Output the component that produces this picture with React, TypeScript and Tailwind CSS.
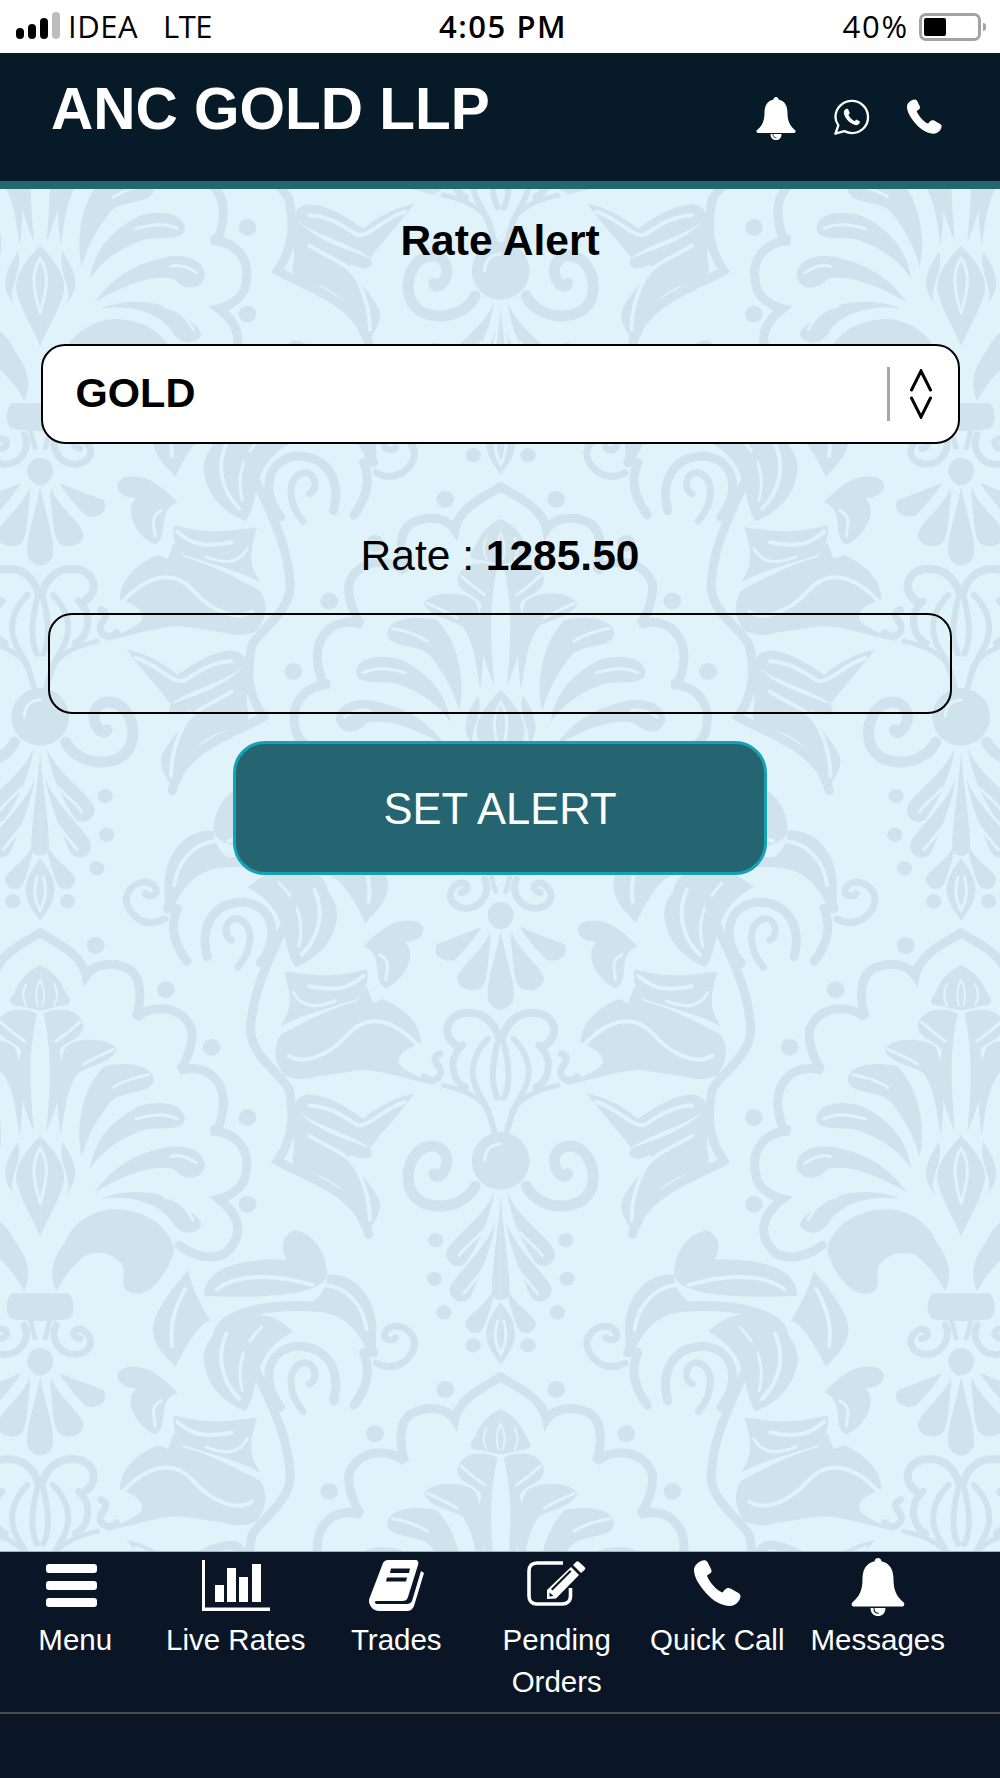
const PAPER = "#e1f3fa"
const INK = "#d0e3ed"
const NAV = "#0a1625"

// half of one damask repeat, traced around the column axis (x = distance from axis)
const fills = [
  // fan above the knot
  "M0 75 C6 130 22 190 20 225 C18 250 8 260 0 260 Z",
  "M14 78 C22 120 62 160 65 190 C65 212 42 222 30 208 C18 190 20 120 14 78 Z",
  "M30 65 L100 105 C106 130 90 150 72 142 C60 125 40 90 30 65 Z",
  // drip below the knot
  "M10 690 C20 750 85 810 85 840 C85 868 65 878 55 862 C40 830 15 760 10 690 Z",
  "M8 760 C15 820 80 900 80 925 C80 958 55 962 47 942 C35 900 12 820 8 760 Z",
  "M0 700 C4 790 14 870 14 930 C14 945 6 950 0 950 Z",
  "M10 915 C15 960 60 990 55 1010 C50 1036 30 1036 25 1010 C20 990 10 950 10 915 Z",
  "M0 955 C15 985 25 1012 22 1040 C20 1066 8 1085 0 1105 Z",
  // wing
  "M125 340 C125 300 145 260 185 235 L200 245 L210 205 L225 240 C250 250 285 270 345 320 C358 350 355 385 340 415 C325 428 305 428 290 420 L225 405 C190 400 140 430 100 440 C130 420 160 400 160 385 C160 365 150 355 125 340 Z",
  "M210 165 C280 190 300 175 340 170 C325 240 330 265 345 300 C300 265 250 250 225 235 C215 225 205 190 210 165 Z",
  "M135 460 C170 470 200 500 215 520 C235 500 265 465 300 462 C315 465 322 475 322 490 C310 530 230 555 205 590 C185 550 160 510 135 460 Z",
  "M325 480 C310 540 240 570 205 590 C195 610 210 625 235 605 C245 620 205 660 190 715 C185 750 205 770 207 795 C235 770 215 710 270 665 C300 640 335 650 325 600 C320 560 335 520 325 480 Z",
  // scroll beside the fan
  "M215 110 C195 80 170 40 135 50 C110 60 120 100 150 100 C130 130 150 190 180 210 C205 190 180 130 215 110 Z",
  // big leaf under the wing
  "M325 785 C345 800 345 830 335 855 C400 850 465 870 465 940 C340 950 275 930 272 890 C272 830 300 785 325 785 Z",
  "M385 985 C440 1000 470 1050 465 1100 C460 1150 440 1190 400 1215 C375 1160 395 1080 325 1025 C345 1000 360 985 385 985 Z",
  "M490 880 C515 920 550 990 545 1030 C540 1070 520 1090 510 1110 C495 1060 470 1000 455 1000 C470 960 485 920 490 880 Z",
  "M272 890 C225 885 197 950 195 1010 C195 1040 195 1060 197 1085 C212 1030 235 985 295 955 C280 940 272 915 272 890 Z",
]

const strokes: [string, number][] = [
  // spiral beside the knot
  ["M40 680 C60 745 150 750 145 650 C140 580 95 565 85 610 C80 640 100 670 105 650", 11],
  // fleur above the knot
  ["M2 330 C10 285 30 268 50 268 C85 268 95 320 70 345", 8],
  ["M5 340 C15 400 15 440 5 470", 6],
  ["M20 330 C40 360 50 400 40 440 C35 465 20 480 10 550", 6],
  ["M60 345 C85 380 75 430 55 445", 7],
  ["M95 365 C110 372 100 390 95 400 C90 420 105 440 120 420", 7],
  ["M90 440 C60 450 35 465 18 500", 5],
  // outer band of the wing
  ["M325 0 C330 60 390 180 392 310 C392 370 340 420 332 450 C325 500 322 560 350 620 C320 650 220 690 207 795", 9],
  // leaf arch, curls and scroll
  ["M440 1060 C460 1000 395 960 300 965 C250 965 220 1000 200 1075", 10],
  ["M345 1205 C375 1150 370 1070 320 1060 C270 1060 250 1120 262 1190", 9],
  ["M310 1215 C335 1170 335 1110 310 1100 C290 1095 285 1140 300 1150", 7],
  ["M230 1200 C205 1150 205 1110 215 1075", 9],
  ["M195 1100 C165 1125 135 1090 135 1050 C140 1010 175 1000 182 1030 C185 1045 170 1050 165 1040", 7],
]

const knockouts: [string, number][] = [
  ["M5 1000 C10 1030 10 1050 0 1080", 3],
  ["M30 790 C45 815 60 830 65 845", 3],
  ["M24 870 C35 895 50 920 58 935", 3],
  ["M130 345 C170 280 210 270 240 320 C270 372 310 392 332 370", 4],
  ["M215 180 C235 205 250 220 300 205", 4],
  ["M260 240 C285 255 310 260 325 220", 3],
  ["M150 480 C185 495 205 540 225 535 C250 510 270 490 300 488", 4],
  ["M300 560 C270 590 240 600 225 640 C215 670 205 715 205 760", 4],
  ["M445 925 C410 885 350 890 295 915", 4],
  ["M430 1030 C445 1080 440 1140 410 1185", 4],
  ["M375 1015 C405 1060 415 1110 405 1165", 3],
  ["M495 925 C510 965 520 1010 515 1060", 4],
  ["M275 915 C240 920 215 965 210 1020", 4],
  ["M190 130 C170 145 180 170 180 190", 3],
]

const dots = [
  [102, 808],
  [104, 900],
  [89, 980],
  [43, 1058],
]

// fleur and its scalloped outline, drawn in the side column's coordinates
const fleurFills = [
  "M0 560 C25 600 45 640 35 680 C25 730 10 760 0 800 Z",
  "M35 575 C55 620 65 660 40 700 C55 665 25 625 35 575 Z",
  "M0 155 C14 165 30 180 40 220 C50 240 52 250 30 252 C15 258 5 262 0 262 Z",
  "M5 270 C30 250 65 260 68 300 C65 335 35 335 30 360 C40 420 30 480 10 550 C15 450 20 370 5 270 Z",
  "M40 350 C55 325 110 325 120 355 C115 385 75 395 60 410 C40 450 38 510 32 560 C25 480 25 400 40 350 Z",
  "M100 395 C125 385 178 385 178 430 C170 465 130 450 110 480 C85 530 75 560 65 610 C55 540 65 450 100 395 Z",
  "M155 490 C185 475 225 480 227 520 C225 550 190 540 165 545 C115 570 90 610 78 640 C85 570 110 525 155 490 Z",
  "M190 590 C225 575 260 595 258 635 C250 670 225 665 210 640 C175 625 125 660 85 695 C110 640 145 605 190 590 Z",
  "M95 710 C130 685 185 690 210 715 C235 740 260 760 250 780 C235 800 215 790 205 760 C185 720 140 700 95 710 Z",
  "M40 810 C50 770 80 740 110 735 C165 730 205 780 210 830 C208 850 200 880 185 905 C175 925 165 935 150 935 C120 930 135 900 130 870 C115 840 95 830 70 845 C50 870 35 900 25 930 C10 880 25 840 40 810 Z",
  "M-45 935 L45 935 C55 950 55 985 45 995 C20 1002 -20 1002 -45 995 Z",
  "M0 1065 C18 1070 22 1095 18 1110 C12 1125 6 1130 0 1130 Z",
  "M0 1130 C5 1185 22 1250 20 1295 C18 1310 8 1320 0 1320 Z",
  "M16 1130 C25 1180 68 1220 68 1250 C65 1275 42 1280 32 1265 C20 1240 20 1180 16 1130 Z",
  "M32 1125 L100 1170 C108 1190 92 1210 72 1202 C60 1185 40 1150 32 1125 Z",
]

const fleurStrokes: [string, number][] = [
  ["M0 78 C22 100 65 125 72 180 C85 150 115 145 140 165 C165 190 155 260 150 280 C175 245 225 250 238 310 C240 350 225 395 218 405 C260 385 302 430 282 530 C280 545 268 548 268 548 C305 550 335 590 320 665 C310 700 280 710 280 710 C315 750 320 800 290 840 C265 860 235 840 218 820", 9],
  ["M25 1010 C15 1040 30 1080 55 1080 C85 1075 85 1035 65 1020 C50 1015 48 1040 62 1042", 7],
  ["M15 1000 C12 1015 12 1025 8 1040", 5],
]

const fleurKnockouts: [string, number][] = [
  ["M0 590 C12 620 14 650 0 720", 3],
  ["M62 290 C55 300 40 320 25 335", 3],
  ["M115 355 C100 365 85 375 68 390", 3],
  ["M170 415 C150 420 130 430 115 445", 3],
  ["M215 520 C195 505 175 510 150 520", 3],
  ["M245 625 C230 610 215 605 205 610", 3],
  ["M240 760 C230 730 215 710 195 705", 3],
  ["M0 190 C6 205 8 225 4 250", 2],
  ["M22 200 C28 215 28 235 22 250", 2],
]

const fleurDots = [
  [87, 108],
  [197, 213],
  [269, 350],
  [325, 517],
  [325, 723],
]

function Filled({ shapes }: { shapes: string[] }) {
  return (
    <>
      {shapes.map((d) => (
        <path key={d} d={d} fill={INK} />
      ))}
    </>
  )
}

function Lines({ lines, color }: { lines: [string, number][]; color: string }) {
  return (
    <>
      {lines.map(([d, w]) => (
        <path key={d} d={d} fill="none" stroke={color} strokeWidth={w} strokeLinecap="round" vectorEffect="non-scaling-stroke" />
      ))}
    </>
  )
}

function Half() {
  return (
    <g>
      <Filled shapes={fills} />
      <Lines lines={strokes} color={INK} />
      <Lines lines={knockouts} color={PAPER} />
      <ellipse cx={0} cy={35} rx={20} ry={30} fill={INK} />
      <ellipse cx={0} cy={620} rx={45} ry={68} fill={INK} />
      <Lines lines={[["M0 580 C15 580 25 595 25 620", 3]]} color={PAPER} />
      {dots.map(([x, y]) => (
        <ellipse key={y} cx={x} cy={y} rx={12} ry={17} fill={INK} />
      ))}
      <g transform="translate(0 1055)">
        <Filled shapes={fleurFills} />
        <Lines lines={fleurStrokes} color={INK} />
        <Lines lines={fleurKnockouts} color={PAPER} />
        {fleurDots.map(([x, y]) => (
          <ellipse key={y} cx={x} cy={y} rx={14} ry={20} fill={INK} />
        ))}
      </g>
    </g>
  )
}

function Unit({ x, y }: { x: number; y: number }) {
  return (
    <g transform={`translate(${x} ${y})`}>
      <Half />
      <g transform="scale(-1 1)">
        <Half />
      </g>
    </g>
  )
}

function Damask() {
  const units: [number, number][] = []
  for (const j of [-2, -1, 0]) {
    units.push([785, 2115 * j])
    units.push([63, 1060 + 2115 * j])
    units.push([1507, 1060 + 2115 * j])
    units.push([-659, 2115 * j])
    units.push([2229, 2115 * j])
  }
  return (
    <svg className="absolute inset-0 h-full w-full" viewBox="0 0 1000 1362" aria-hidden="true">
      <g transform="translate(0 711) scale(0.6378 0.4209)">
        {units.map(([x, y]) => (
          <Unit key={`${x}-${y}`} x={x} y={y} />
        ))}
      </g>
    </svg>
  )
}

function Bell({ className }: { className: string }) {
  return (
    <svg viewBox="0 0 40 43" className={className} fill="white" aria-hidden="true">
      <path d="M20 0 C21.500 0 22.500 1 22.500 2.500 C29 4 31.500 9 31.500 16 C31.500 24 34 29 39 33 C40 34 39.500 36 38 36 L2 36 C0.500 36 0 34 1 33 C6 29 8.500 24 8.500 16 C8.500 9 11 4 17.500 2.500 C17.500 1 18.500 0 20 0 Z" />
      <path d="M14.500 37 L25.500 37 C25.500 41 23 43 20 43 C17 43 14.500 41 14.500 37 Z" />
      <path d="M17 37 C17 39.500 18.500 41 20.500 41" fill="none" stroke={NAV} strokeWidth="0.8" />
    </svg>
  )
}

function Phone({ className }: { className: string }) {
  return (
    <svg viewBox="0 0 47 46" className={className} fill="white" aria-hidden="true">
      <path d="M7 1 C10 -0.500 12 0 13.500 2 L17 9 C18 11 17.500 12.500 16 13.500 L13 15.500 C14.500 21 23 31 28.500 32.500 L31 29.500 C32.500 28 34.500 27.500 36.500 28.500 L44.500 33 C46.500 34.500 47 36 46 38.500 C44.500 43 40 46 36 46 C28 46 19 41 12 33 C5 25 0 17 0 10 C0 6 3 3 7 1 Z" />
    </svg>
  )
}

function Whatsapp() {
  return (
    <svg viewBox="0 0 38 38" className="h-[37px] w-[37px]" aria-hidden="true">
      <path d="M2.500 35.500 L5.500 27 C3.500 24 2.500 21.500 2.500 18.500 C2.500 9.500 10 2 19.500 2 C28.500 2 36 9.500 36 18.500 C36 28 28.500 35 19.500 35 C16.500 35 14 34.200 11.500 33 Z" fill="none" stroke="white" strokeWidth="2.400" strokeLinejoin="round" />
      <path d="M13.500 10 C11.500 11 10.500 13 11.500 16 C13 20.500 17 25 22 26.500 C25 27.500 27 26.500 27.500 24 L27.500 22.800 L23.800 21 L22.300 22.800 C19.500 21.500 17 19 15.800 16.300 L17.300 14.800 L15.500 10.300 Z" fill="white" />
    </svg>
  )
}

function MenuIcon() {
  return (
    <svg viewBox="0 0 51 43" className="h-[43px] w-[51px]" fill="white" aria-hidden="true">
      <rect x="0" y="0" width="51" height="9" rx="3" />
      <rect x="0" y="17" width="51" height="9" rx="3" />
      <rect x="0" y="34" width="51" height="9" rx="3" />
    </svg>
  )
}

function BarsChart() {
  return (
    <svg viewBox="0 0 68 51" className="h-[51px] w-[68px]" fill="white" aria-hidden="true">
      <path d="M0 0 H3 V47.500 H68 V51 H0 Z" />
      <rect x="13" y="25" width="9" height="17" />
      <rect x="25" y="8" width="9" height="34" />
      <rect x="37" y="17" width="9" height="25" />
      <rect x="50" y="4" width="9" height="38" />
    </svg>
  )
}

function Book() {
  return (
    <svg viewBox="0 0 55 51" className="h-[51px] w-[55px]" aria-hidden="true">
      <path
        fill="white"
        d="M14 3 C15 1 17 0 19 0 H46 C49 0 50 2 49 5 L39 37 C38 40 36 41 33 41 H8 C6 41 5 42 6 43 C7 44 8 44 10 44 H38 C40 44 42 43 43 41 L52 11 L55 13 L45 46 C44 49 41 51 38 51 H10 C5 51 1 47 0 42 C0 40 0 39 1 37 Z"
      />
      <path fill={NAV} d="M22 8.500 H41 L40 13 H21 Z M18 17.500 H38 L37 21.500 H17 Z" />
    </svg>
  )
}

function EditIcon() {
  return (
    <svg viewBox="0 0 59 46" className="h-[46px] w-[59px]" aria-hidden="true">
      <path d="M36 3 H10 C5 3 2 6 2 11 V36 C2 41 5 44 10 44 H35 C40 44 43.500 41 43.500 36 V28" fill="none" stroke="white" strokeWidth="3.600" />
      <path fill="white" d="M46 5 L49 2 C50 1 51 1 52 2 L57.500 7 C58.500 8 58.500 9 57.500 10 L54 13 Z M44 7 L52 15 L29 38.500 L20 39 L20 30 Z" />
      <path fill={NAV} d="M22.500 32.500 L26.500 36 L22.500 36.500 Z M24 29 L43 10 L44.500 11.500 L25.500 30.500 Z" />
    </svg>
  )
}

function Tab({ label, icon }: { label: string; icon: React.ReactNode }) {
  return (
    <div className="flex flex-col items-center">
      <div className="flex h-[59px] items-start justify-center">{icon}</div>
      <span className="w-[150px] text-center text-[29.5px] leading-[42px] text-white">{label}</span>
    </div>
  )
}

export default function App() {
  return (
    <div className="flex h-[1778px] w-[1000px] flex-col overflow-hidden font-['Liberation_Sans',sans-serif] text-black">
      <div className="relative flex h-[53px] shrink-0 items-center bg-white pl-4 pr-[14px] font-['Open_Sans',sans-serif] text-[31px]">
        <div className="flex items-end gap-1 pb-0.5">
          <span className="h-[11px] w-2 rounded-sm bg-black" />
          <span className="h-[15px] w-2 rounded-sm bg-black" />
          <span className="h-[21px] w-2 rounded-sm bg-black" />
          <span className="h-[27px] w-2 rounded-sm bg-[#bdbdbd]" />
        </div>
        <span className="ml-2 tracking-[0.5px]">IDEA</span>
        <span className="ml-[25px] tracking-[-0.5px]">LTE</span>
        <span className="absolute left-[439px] font-semibold tracking-wider">4:05 PM</span>
        <span className="ml-auto tracking-[1.8px]">40%</span>
        <div className="ml-2.5 flex items-center">
          <div className="flex h-[28px] w-[62px] items-center rounded-[7px] border-[3px] border-[#a3a3a3] p-0.5">
            <div className="h-full w-[22px] rounded-[2px] bg-black" />
          </div>
          <span className="ml-0.5 h-2 w-[3px] rounded-r bg-[#a3a3a3]" />
        </div>
      </div>

      <header className="flex h-[136px] shrink-0 items-start border-b-8 border-[#25666f] bg-[#071a27] pl-[51px] pr-[58px]">
        <h1 className="mt-[23px] text-[58.5px] font-bold leading-[66px] text-white">ANC GOLD LLP</h1>
        <div className="ml-auto mt-11 flex items-start gap-[37px]">
          <Bell className="h-[43px] w-10" />
          <div className="mt-0.5">
            <Whatsapp />
          </div>
          <Phone className="mt-0.5 h-[35px] w-[35px]" />
        </div>
      </header>

      <main className="relative flex-1 overflow-hidden bg-[#e1f3fa]">
        <Damask />
        <div className="relative flex flex-col items-center">
          <h2 className="mt-[28px] text-[42.5px] font-bold leading-[48px]">Rate Alert</h2>
          <div className="mt-[79px] flex h-[100px] w-[919px] items-center rounded-[24px] border-[2.5px] border-black bg-white pl-[33px]">
            <span className="-mt-0.5 text-[41.5px] font-bold">GOLD</span>
            <div className="ml-auto mr-[20px] h-[54px] w-[3px] bg-[#a8a8a8]" />
            <svg viewBox="0 0 22 50" className="mr-[26px] h-[50px] w-[22px]" fill="none" stroke="black" strokeWidth="3" strokeLinecap="round" aria-hidden="true">
              <path d="M1.500 21 L11 2 L20.500 21 M1.500 29 L11 48 L20.500 29" />
            </svg>
          </div>
          <p className="mt-[87px] text-[42.5px] leading-[50px]">
            Rate : <b>1285.50</b>
          </p>
          <div className="mt-[32px] h-[101px] w-[904px] rounded-[24px] border-[2.5px] border-black" />
          <button className="mt-[27px] flex h-[134px] w-[534px] items-center justify-center rounded-[32px] border-[3px] border-[#15a1b6] bg-[#256572] pt-1 text-[43.5px] text-white">
            SET ALERT
          </button>
        </div>
      </main>

      <nav className="h-[227px] shrink-0 border-t border-[#9fb4c1] bg-[#0a1625]">
        <div className="-ml-[5px] grid h-[160px] w-[963px] grid-cols-6 pt-2">
          <Tab label="Menu" icon={<div className="-ml-2 pt-1"><MenuIcon /></div>} />
          <Tab label="Live Rates" icon={<BarsChart />} />
          <Tab label="Trades" icon={<Book />} />
          <Tab label="Pending Orders" icon={<EditIcon />} />
          <Tab label="Quick Call" icon={<Phone className="h-[46px] w-[47px]" />} />
          <Tab label="Messages" icon={<div className="-mt-0.5"><Bell className="h-[58px] w-[56px]" /></div>} />
        </div>
        <div className="h-0.5 w-full bg-[#4a4a4a]" />
      </nav>
    </div>
  )
}
